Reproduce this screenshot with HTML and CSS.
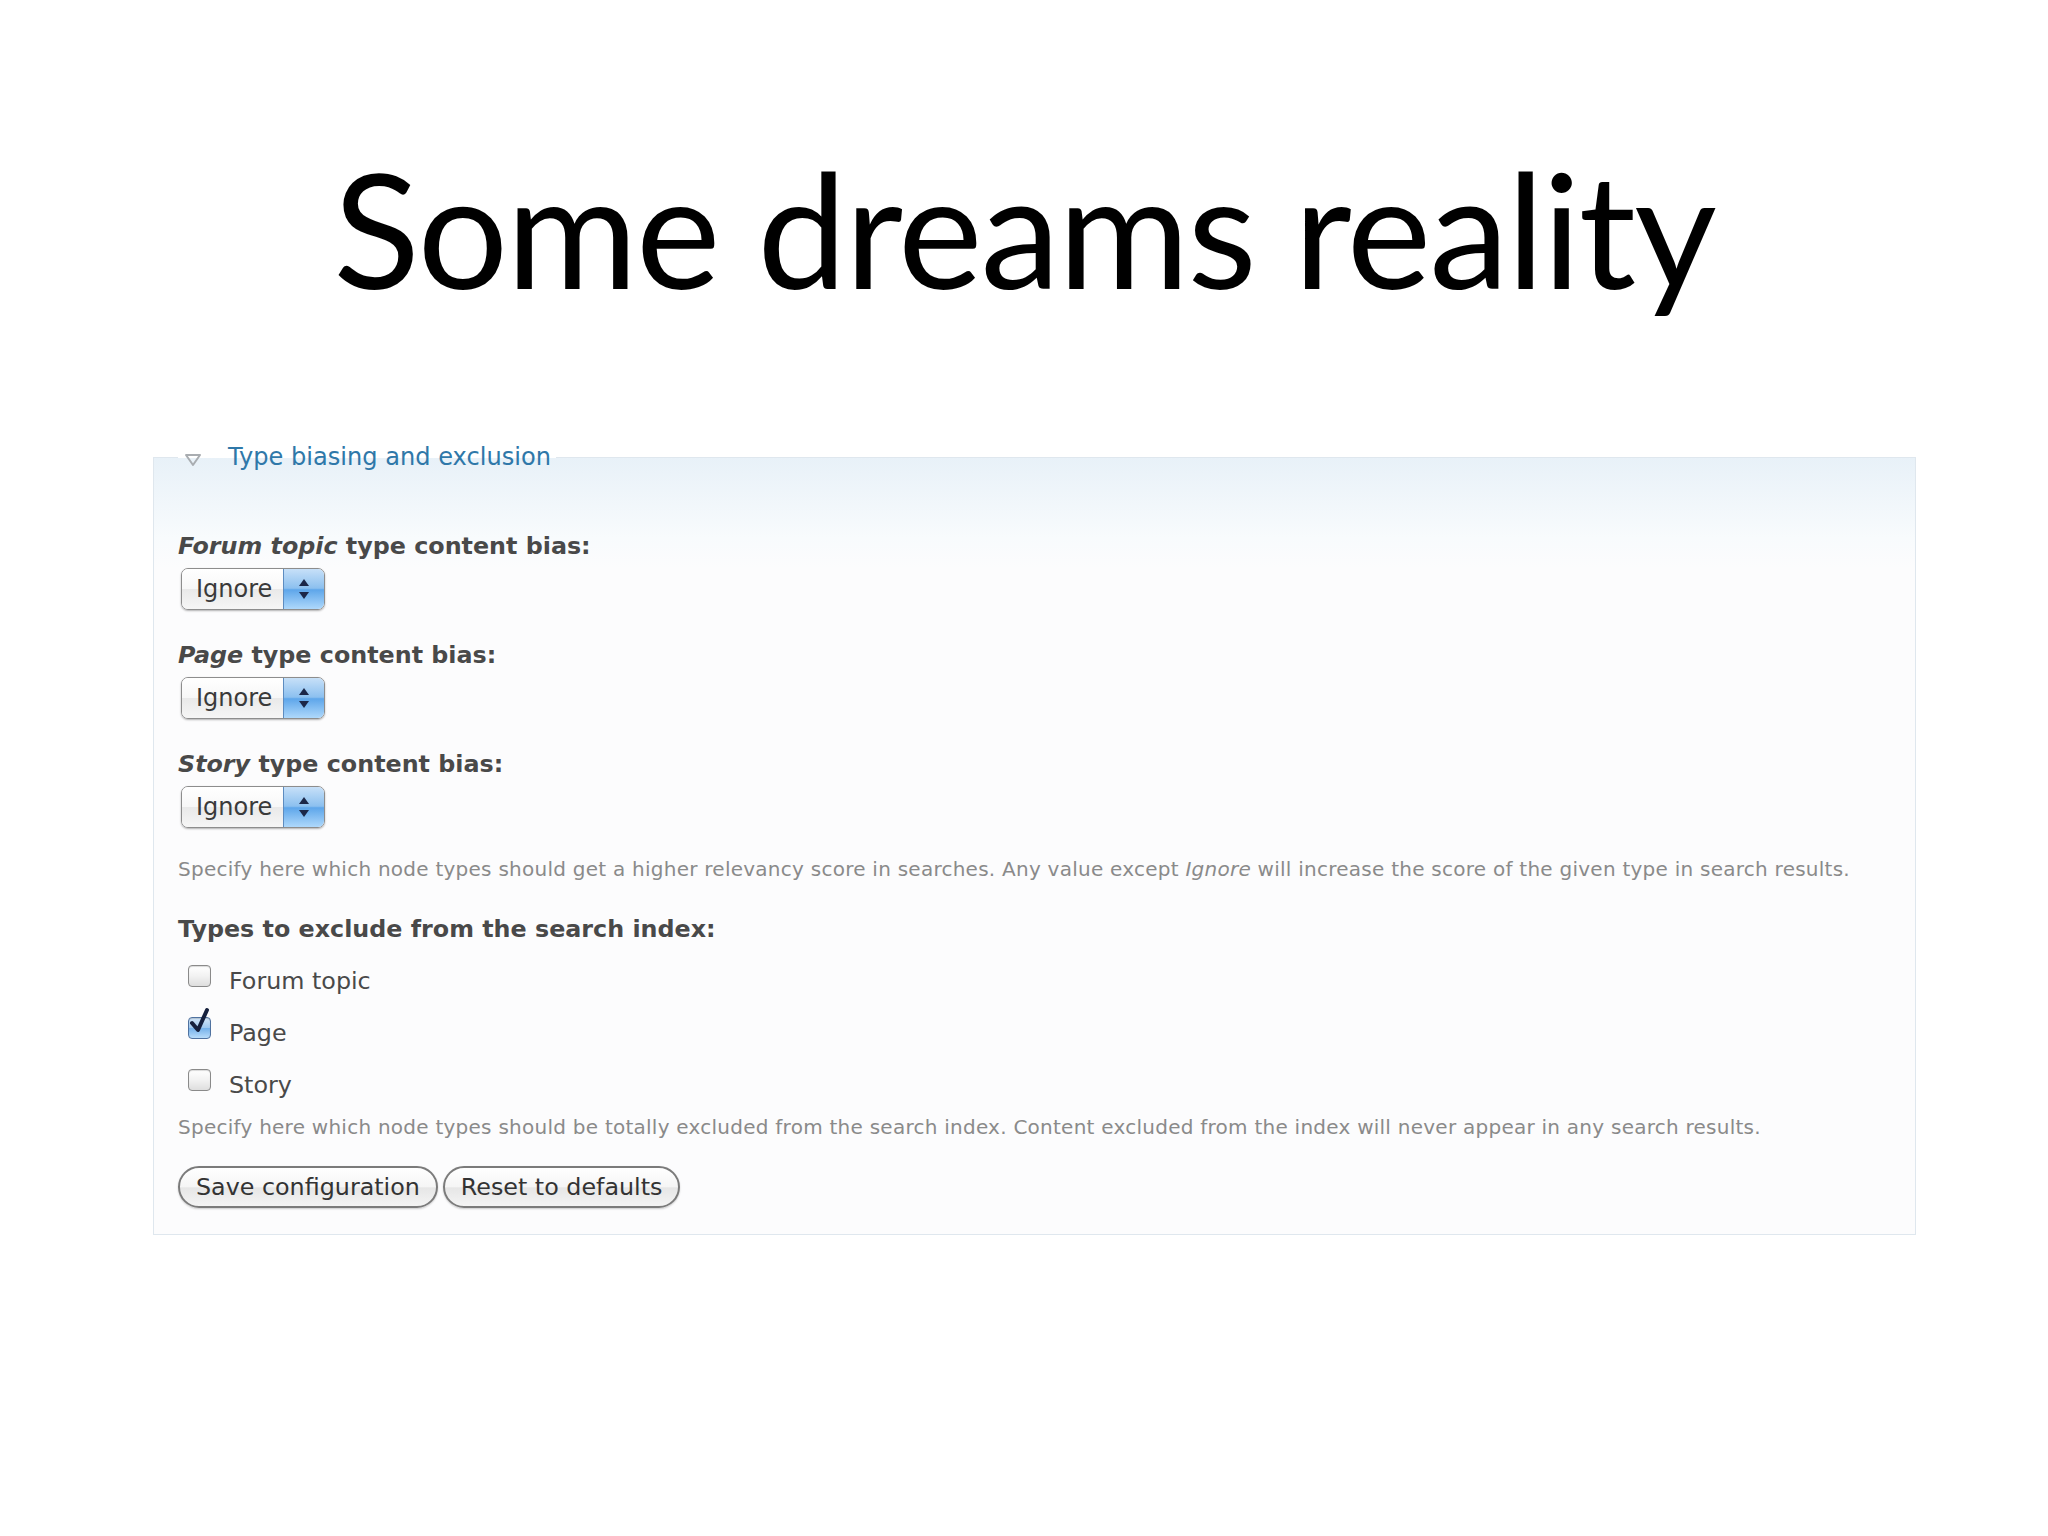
FILE: index.html
```html
<!DOCTYPE html>
<html>
<head>
    <title>Some dreams reality</title>
    <link rel="stylesheet" href="styles.css">
</head>
<body>
    <div class="slide">
        <h1 class="slide-title">Some dreams reality</h1>

        <form class="settings">
            <fieldset class="collapsible">
                <legend>
                    <svg class="toggle" width="18" height="14" viewBox="0 0 18 14">
                        <path d="M2 2 L16 2 L9 12 Z" fill="none" stroke="#a9adb1" stroke-width="2" stroke-linejoin="round"/>
                    </svg><span class="legend-text">Type biasing and exclusion</span>
                </legend>

                <!-- bias selects, one per content type -->
                <div class="form-item bias">
                    <label class="item-title"><em>Forum topic</em> type content bias:</label>
                    <div class="popup">
                        <span class="popup-value">Ignore</span>
                        <span class="popup-arrows">
                            <svg width="40" height="40" viewBox="0 0 40 40">
                                <path d="M15 17 L25 17 L20 10 Z" fill="#1c2748"/>
                                <path d="M15 23 L25 23 L20 30 Z" fill="#1c2748"/>
                            </svg>
                        </span>
                    </div>
                </div>
                <div class="form-item bias">
                    <label class="item-title"><em>Page</em> type content bias:</label>
                    <div class="popup">
                        <span class="popup-value">Ignore</span>
                        <span class="popup-arrows">
                            <svg width="40" height="40" viewBox="0 0 40 40">
                                <path d="M15 17 L25 17 L20 10 Z" fill="#1c2748"/>
                                <path d="M15 23 L25 23 L20 30 Z" fill="#1c2748"/>
                            </svg>
                        </span>
                    </div>
                </div>
                <div class="form-item bias">
                    <label class="item-title"><em>Story</em> type content bias:</label>
                    <div class="popup">
                        <span class="popup-value">Ignore</span>
                        <span class="popup-arrows">
                            <svg width="40" height="40" viewBox="0 0 40 40">
                                <path d="M15 17 L25 17 L20 10 Z" fill="#1c2748"/>
                                <path d="M15 23 L25 23 L20 30 Z" fill="#1c2748"/>
                            </svg>
                        </span>
                    </div>
                </div>
                <p class="description first">Specify here which node types should get a higher relevancy score in searches. Any value except <em>Ignore</em> will increase the score of the given type in search results.</p>

                <!-- excluded types -->
                <div class="form-item exclude">
                    <label class="item-title">Types to exclude from the search index:</label>
                    <div class="checkboxes">
                        <label class="option"><span class="check"></span>Forum topic</label>
                        <label class="option"><span class="check checked">
                            <svg class="tick" width="26" height="30" viewBox="0 0 26 30">
                                <path d="M5 16 L11 23 L20 3" fill="none" stroke="#16203d" stroke-width="4" stroke-linecap="round" stroke-linejoin="round"/>
                            </svg>
                        </span>Page</label>
                        <label class="option"><span class="check"></span>Story</label>
                    </div>
                    <p class="description">Specify here which node types should be totally excluded from the search index. Content excluded from the index will never appear in any search results.</p>
                </div>

                <div class="actions">
                    <button type="button">Save configuration</button>
                    <button type="button">Reset to defaults</button>
                </div>
            </fieldset>
        </form>
    </div>
</body>
</html>
```

FILE: styles.css
```css
body {
    margin: 0;
    background: #fff;
    font-family: "DejaVu Sans", Verdana, sans-serif;
    color: #494949;
}
.slide-title {
    margin: 0;
    padding-top: 128px;
    font-family: Lato, "Open Sans", sans-serif;
    font-weight: 400;
    font-size: 160px;
    line-height: 198px;
    letter-spacing: -2px;
    text-align: center;
    color: #000;
}
.settings {
    margin: 118px 0 0 153px;
    width: 1763px;
}
fieldset {
    margin: 0;
    min-width: 0;
    padding: 63px 24px 26px;
    border: 1px solid #dfe7ee;
    background: linear-gradient(#e8f1f8, #f8fbfd 80px, #fcfcfd 110px);
}
legend {
    padding: 0 5px 0 6px;
    font-size: 24.1px;
    line-height: 26px;
    color: #2f78a9;
}
.toggle {
    vertical-align: -2px;
    margin-right: 26px;
}
.item-title {
    display: block;
    font-weight: bold;
    font-size: 23.8px;
    line-height: 26px;
    margin-bottom: 9px;
}
.bias {
    margin-bottom: 32px;
}
.bias:nth-of-type(3) {
    margin-bottom: 0;
}

/* aqua style popup button */
.popup {
    display: flex;
    box-sizing: border-box;
    width: 144px;
    height: 42px;
    margin-left: 3px;
    border: 1px solid #8d8d8d;
    border-radius: 7px;
    overflow: hidden;
    box-shadow: 0 1px 2px rgba(0, 0, 0, 0.3);
}
.popup-value {
    flex: 1;
    padding-left: 14px;
    font-size: 24px;
    line-height: 40px;
    color: #3a3a3a;
    background: linear-gradient(#ffffff, #f7f7f7 50%, #e9e9e9 51%, #f6f6f6);
}
.popup-arrows {
    width: 40px;
    border-left: 1px solid #5d8cc0;
    background: linear-gradient(#c7e0f8, #8cc0ef 48%, #5ea6ea 52%, #aed8fb);
}
.popup-arrows svg {
    display: block;
}

.description {
    margin: 0;
    font-size: 20px;
    letter-spacing: 0.25px;
    line-height: 26px;
    color: #8a8a8a;
}
.description.first {
    margin: 28px 0 34px;
}
.checkboxes {
    margin-top: 13px;
}
.option {
    display: flex;
    align-items: center;
    height: 52px;
    font-size: 23.8px;
    color: #494949;
}
.check {
    position: relative;
    box-sizing: border-box;
    width: 23px;
    height: 22px;
    margin: 0 18px 10px 10px;
    border: 1px solid #8a8a8a;
    border-radius: 4px;
    background: linear-gradient(#ffffff, #f2f2f2 50%, #dedede);
    box-shadow: inset 0 1px 1px rgba(0, 0, 0, 0.15);
}
.check.checked {
    border-color: #4f72a0;
    background: linear-gradient(#d3e6f8, #9fc8ef 50%, #75b1ea 51%, #b8dcfa);
}
.tick {
    position: absolute;
    left: -2px;
    top: -11px;
}
.exclude .description {
    margin-top: 3px;
}
.actions {
    display: flex;
    gap: 5px;
    margin-top: 26px;
}
.actions button {
    box-sizing: border-box;
    height: 42px;
    padding: 0 16px;
    font-family: "DejaVu Sans", Verdana, sans-serif;
    font-size: 23.8px;
    color: #333;
    border: 2px solid #7b7b7b;
    border-radius: 21px;
    background: linear-gradient(#ffffff, #f5f5f5 50%, #e6e6e6 52%, #f4f4f4);
    box-shadow: 0 1px 2px rgba(0, 0, 0, 0.2);
}
```
